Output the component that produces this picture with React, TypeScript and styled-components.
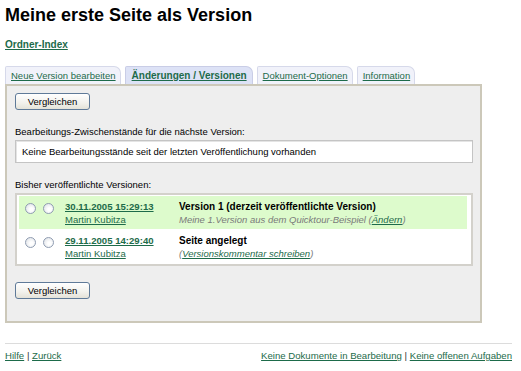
import React from "react";
import styled, { createGlobalStyle } from "styled-components";

const GlobalStyle = createGlobalStyle`
  html, body {
    margin: 0;
    padding: 0;
    background: #ffffff;
  }
  body {
    font-family: "Liberation Sans", Arial, sans-serif;
    font-size: 9.5px;
    color: #000;
  }
`;

const linkColor = "#1d6b4a";

const Page = styled.div`
  padding: 0 9px 0 5px;
`;

const Title = styled.h1`
  margin: 5px 0 0;
  font-size: 18px;
  line-height: 20px;
  font-weight: bold;
`;

const Link = styled.a<{ $bold?: boolean; $italic?: boolean }>`
  color: ${linkColor};
  text-decoration: underline;
  font-weight: ${(p) => (p.$bold ? "bold" : "normal")};
  font-style: ${(p) => (p.$italic ? "italic" : "normal")};
  cursor: pointer;
`;

const IndexLine = styled.div`
  margin-top: 14px;
  font-size: 10px;
  line-height: 12px;
`;

const TabBar = styled.div`
  display: flex;
  gap: 4px;
  margin-top: 14px;
  height: 19px;
  align-items: flex-end;
`;

const Tab = styled.div<{ $active?: boolean }>`
  height: 18px;
  box-sizing: border-box;
  display: flex;
  align-items: center;
  padding: 0 ${(p) => (p.$active ? "5px 0 6px" : "4px 0 5px")};
  background: ${(p) => (p.$active ? "#dde2f6" : "#f1f2fa")};
  border: 1px solid ${(p) => (p.$active ? "#c9cde6" : "#d6d9ea")};
  border-bottom: none;
  border-radius: 2px 7px 0 0;
  font-size: ${(p) => (p.$active ? "10px" : "9.5px")};
`;

const Panel = styled.div`
  width: 477px;
  box-sizing: border-box;
  background: #eeeeee;
  border: 2px solid #ccc8b9;
  padding: 7px 8px 22px;
`;

const Button = styled.button`
  display: block;
  width: 75px;
  height: 17px;
  padding: 0;
  border: 1px solid #5f7a98;
  border-radius: 3px;
  background: linear-gradient(#ffffff, #f2f1ec 60%, #e4e2d8);
  font-family: "Liberation Sans", Arial, sans-serif;
  font-size: 9.5px;
  color: #000;
`;

const Label = styled.div`
  margin-top: 16px;
  line-height: 12px;
`;

const Field = styled.div`
  margin-top: 2px;
  width: 458px;
  height: 23px;
  box-sizing: border-box;
  background: #fff;
  border: 1px solid #c4c4c4;
  box-shadow: inset 1px 1px 0 #e4e4e4;
  display: flex;
  align-items: center;
  padding-left: 6px;
`;

const VersionBox = styled.div`
  margin-top: 2px;
  width: 458px;
  box-sizing: border-box;
  background: #fff;
  border: 2px solid #d3d1cb;
  padding: 1px 4px 1px 2px;
  display: flex;
  flex-direction: column;
  gap: 1px;
`;

const Row = styled.div<{ $current?: boolean }>`
  display: flex;
  height: 33px;
  box-sizing: border-box;
  padding: 4px 0 0 6px;
  background: ${(p) => (p.$current ? "#ddfbcc" : "#ffffff")};
`;

const Radio = styled.span`
  width: 11px;
  height: 11px;
  box-sizing: border-box;
  border-radius: 50%;
  border: 1px solid #8f9cb1;
  background: radial-gradient(circle at 60% 60%, #ffffff 20%, #d9dde3 100%);
  margin: 3px 7px 0 0;
  flex-shrink: 0;
`;

const DateCol = styled.div`
  width: 114px;
  margin-left: 4px;
  line-height: 13px;
  display: flex;
  flex-direction: column;
  align-items: flex-start;
`;

const DescCol = styled.div`
  line-height: 13px;
  display: flex;
  flex-direction: column;
`;

const Strong = styled.span`
  font-weight: bold;
  font-size: 10px;
`;

const Comment = styled.span`
  font-style: italic;
  color: #7a7a7a;
`;

const DateLink = styled(Link)`
  font-size: 9.6px;
`;

const BottomButton = styled(Button)`
  margin-top: 16px;
`;

const Footer = styled.div`
  margin-top: 20px;
  border-top: 1px solid #dcdcdc;
  padding-top: 6px;
  display: flex;
  justify-content: space-between;
  line-height: 12px;
  font-size: 9.6px;
`;

const Sep = styled.span`
  color: #333;
`;

const versions = [
  {
    date: "30.11.2005 15:29:13",
    author: "Martin Kubitza",
    title: "Version 1 (derzeit veröffentlichte Version)",
    comment: "Meine 1.Version aus dem Quicktour-Beispiel",
    action: "Ändern",
    current: true,
  },
  {
    date: "29.11.2005 14:29:40",
    author: "Martin Kubitza",
    title: "Seite angelegt",
    comment: "",
    action: "Versionskommentar schreiben",
    current: false,
  },
];

export default function App() {
  return (
    <Page>
      <GlobalStyle />
      <Title>Meine erste Seite als Version</Title>
      <IndexLine>
        <Link $bold>Ordner-Index</Link>
      </IndexLine>

      <TabBar>
        <Tab>
          <Link>Neue Version bearbeiten</Link>
        </Tab>
        <Tab $active>
          <Link $bold>Änderungen / Versionen</Link>
        </Tab>
        <Tab>
          <Link>Dokument-Optionen</Link>
        </Tab>
        <Tab>
          <Link>Information</Link>
        </Tab>
      </TabBar>

      <Panel>
        <Button>Vergleichen</Button>
        <Label>Bearbeitungs-Zwischenstände für die nächste Version:</Label>
        <Field>Keine Bearbeitungsstände seit der letzten Veröffentlichung vorhanden</Field>
        <Label>Bisher veröffentlichte Versionen:</Label>
        <VersionBox>
          {versions.map((v) => (
            <Row key={v.date} $current={v.current}>
              <Radio />
              <Radio />
              <DateCol>
                <DateLink $bold>{v.date}</DateLink>
                <Link>{v.author}</Link>
              </DateCol>
              <DescCol>
                <Strong>{v.title}</Strong>
                <Comment>
                  {v.comment ? v.comment + " " : ""}(
                  <Link $italic>{v.action}</Link>)
                </Comment>
              </DescCol>
            </Row>
          ))}
        </VersionBox>
        <BottomButton>Vergleichen</BottomButton>
      </Panel>

      <Footer>
        <span>
          <Link>Hilfe</Link> <Sep>|</Sep> <Link>Zurück</Link>
        </span>
        <span>
          <Link>Keine Dokumente in Bearbeitung</Link> <Sep>|</Sep>{" "}
          <Link>Keine offenen Aufgaben</Link>
        </span>
      </Footer>
    </Page>
  );
}
